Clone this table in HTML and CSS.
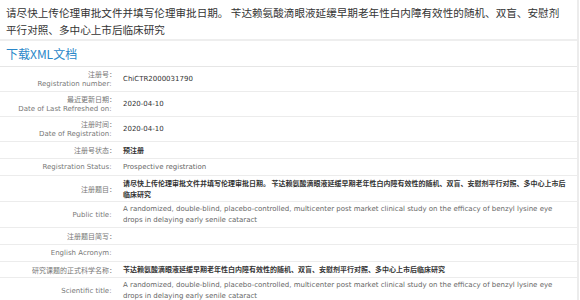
FILE: index.html
```html
<!DOCTYPE html>
<html lang="zh-CN">
<head>
<meta charset="utf-8">
<title>ChiCTR2000031790</title>
<link rel="stylesheet" href="styles.css">
</head>
<body>
<div class="page">
  <div class="title">请尽快上传伦理审批文件并填写伦理审批日期。 苄达赖氨酸滴眼液延缓早期老年性白内障有效性的随机、双盲、安慰剂平行对照、多中心上市后临床研究</div>
  <div class="download"><a class="dl-link" href="#">下载XML文档</a></div>
  <table class="info">
    <tr>
      <td class="lbl"><div class="zh">注册号：</div><div class="en">Registration number:</div></td>
      <td class="val dark">ChiCTR2000031790</td>
    </tr>
    <tr>
      <td class="lbl"><div class="zh">最近更新日期：</div><div class="en">Date of Last Refreshed on:</div></td>
      <td class="val dark">2020-04-10</td>
    </tr>
    <tr>
      <td class="lbl"><div class="zh">注册时间：</div><div class="en">Date of Registration:</div></td>
      <td class="val dark">2020-04-10</td>
    </tr>
    <tr>
      <td class="lbl zh">注册号状态：</td>
      <td class="val zhv">预注册</td>
    </tr>
    <tr>
      <td class="lbl"><span class="en">Registration Status:</span></td>
      <td class="val">Prospective registration</td>
    </tr>
    <tr>
      <td class="lbl zh">注册题目：</td>
      <td class="val zhv">请尽快上传伦理审批文件并填写伦理审批日期。 苄达赖氨酸滴眼液延缓早期老年性白内障有效性的随机、双盲、安慰剂平行对照、多中心上市后临床研究</td>
    </tr>
    <tr>
      <td class="lbl"><span class="en">Public title:</span></td>
      <td class="val">A randomized, double-blind, placebo-controlled, multicenter post market clinical study on the efficacy of benzyl lysine eye drops in delaying early senile cataract</td>
    </tr>
    <tr>
      <td class="lbl zh">注册题目简写：</td>
      <td class="val"></td>
    </tr>
    <tr>
      <td class="lbl"><span class="en">English Acronym:</span></td>
      <td class="val"></td>
    </tr>
    <tr class="short">
      <td class="lbl zh">研究课题的正式科学名称：</td>
      <td class="val zhv">苄达赖氨酸滴眼液延缓早期老年性白内障有效性的随机、双盲、安慰剂平行对照、多中心上市后临床研究</td>
    </tr>
    <tr>
      <td class="lbl"><span class="en">Scientific title:</span></td>
      <td class="val">A randomized, double-blind, placebo-controlled, multicenter post market clinical study on the efficacy of benzyl lysine eye drops in delaying early senile cataract</td>
    </tr>
  </table>
</div>
</body>
</html>
```

FILE: styles.css
```css
html, body {
  margin: 0;
  padding: 0;
  background: #fff;
}

body {
  font-family: "DejaVu Sans", "Noto Sans CJK SC", sans-serif;
  color: #333;
  overflow: hidden;
}

.page {
  width: 579px;
  height: 300px;
  border-right: 2px solid #ececec;
  box-sizing: border-box;
}

.title {
  font-family: "Noto Sans CJK SC", sans-serif;
  font-size: 10.6px;
  line-height: 17px;
  color: #333;
  padding: 4px 16px 1px 6px;
  border-bottom: 2px solid #eeeeee;
}

.download {
  padding: 0 6px;
  line-height: 25px;
  height: 25px;
  border-bottom: 1px solid #e6e6e6;
}

.dl-link {
  font-family: "Noto Sans CJK SC", sans-serif;
  font-size: 12px;
  color: #2a87c9;
  text-decoration: none;
}

.info {
  width: 100%;
  border-collapse: collapse;
  font-size: 7px;
}

.info tr {
  height: 17px;
}

.info tr.short {
  height: 16px;
}

.info td {
  border-bottom: 1px solid #ececec;
  padding: 2px 0;
  vertical-align: middle;
}

.lbl {
  width: 116px;
  text-align: right;
  color: #777;
  line-height: 10px;
  white-space: nowrap;
}

.info td.lbl {
  padding-right: 4px;
}

.zh {
  font-family: "Noto Sans CJK SC", sans-serif;
}

.en {
  font-family: "DejaVu Sans", sans-serif;
  padding-right: 4.5px;
}

.val {
  color: #666;
  line-height: 11px;
}

.info td.val {
  padding: 1.5px 6px 1.5px 3px;
}

.dark {
  color: #333;
}

.zhv {
  font-family: "Noto Sans CJK SC", sans-serif;
  font-weight: bold;
  color: #333;
}
```
